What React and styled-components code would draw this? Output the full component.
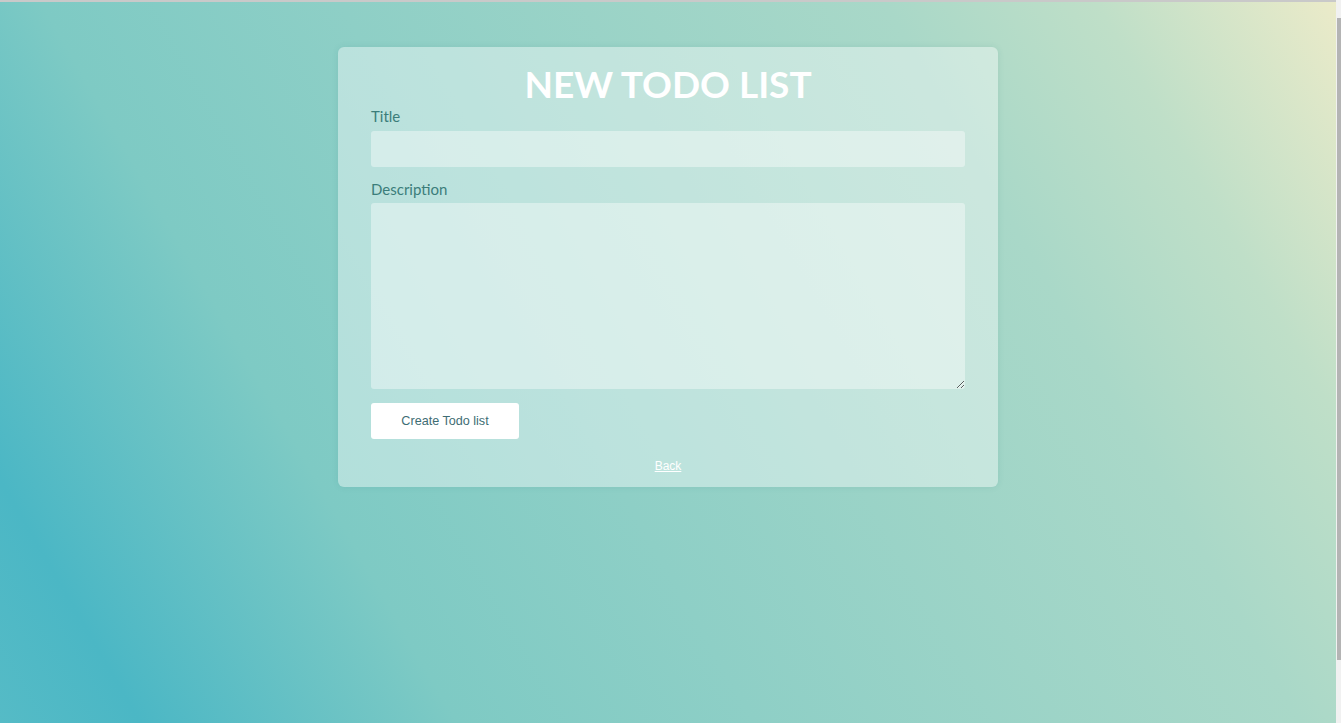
import React from "react";
import styled, { createGlobalStyle, } from "styled-components";

// --------------------------------------------------

const GlobalStyle = createGlobalStyle`
	html, body {
		margin: 0;
		padding: 0;
	}

	body {
		min-height: 100vh;
		box-sizing: border-box;
		border-top: 2px solid #c9c9c9;
		font-family: Lato, "Liberation Sans", sans-serif;
		background: linear-gradient(60deg, #55bbc6 0%, #4bb7c5 8%, #7ecac4 26%, #8ecfc6 43%, #a9d8c8 74%, #bfdfc8 86%, #ecebc9 100%);
		background-attachment: fixed;
	}
`;

const Page = styled.div`
	display: flex;
	justify-content: center;
	padding: 45px 5px 0 0;
`;

const Scrollbar = styled.div`
	position: fixed;
	top: 0;
	right: 0;
	bottom: 0;
	width: 5px;
	background: #f1f1f1;

	&::after {
		content: "";
		position: absolute;
		top: 18px;
		bottom: 63px;
		left: 1px;
		right: 0;
		background: #b4b4b4;
	}
`;

const Card = styled.form`
	box-sizing: border-box;
	width: 660px;
	padding: 13px 33px 13px;
	border-radius: 6px;
	background: rgba(255, 255, 255, 0.4);
	box-shadow: 0 0 6px rgba(40, 120, 120, 0.12);
	display: flex;
	flex-direction: column;
`;

const Heading = styled.h1`
	margin: 0;
	font-family: Lato, "Liberation Sans", sans-serif;
	font-size: 37px;
	font-weight: 700;
	line-height: 47px;
	color: #ffffff;
	text-align: center;
`;

const Label = styled.label`
	display: block;
	margin-top: ${ props => props.gap }px;
	margin-bottom: ${ props => props.below }px;
	font-size: 15px;
	line-height: 18px;
	color: #3b7d7a;
`;

const Field = styled.input`
	box-sizing: border-box;
	display: block;
	width: 100%;
	height: 36px;
	border: none;
	border-radius: 3px;
	background: rgba(255, 255, 255, 0.4);
	outline: none;
`;

const Area = styled.textarea`
	box-sizing: border-box;
	display: block;
	width: 100%;
	height: 186px;
	border: none;
	border-radius: 3px;
	background: rgba(255, 255, 255, 0.4);
	outline: none;
	resize: vertical;
`;

const Button = styled.button`
	align-self: flex-start;
	width: 148px;
	height: 36px;
	margin-top: 14px;
	border: none;
	border-radius: 3px;
	background: #ffffff;
	font-family: "Liberation Sans", Arial, sans-serif;
	font-size: 12.6px;
	color: #3e6d74;
	cursor: pointer;
`;

const BackLink = styled.a`
	align-self: center;
	margin-top: 19px;
	font-family: "Liberation Sans", Arial, sans-serif;
	font-size: 12px;
	line-height: 16px;
	color: #ffffff;
	text-decoration: underline;
`;

// --------------------------------------------------

const App = () => (
	<>
		<GlobalStyle />
		<Page>
			<Card onSubmit = { e => e.preventDefault() }>
				<Heading>NEW TODO LIST</Heading>
				<Label gap = { 0 } below = { 6 }>Title</Label>
				<Field type = "text" />
				<Label gap = { 13 } below = { 5 }>Description</Label>
				<Area />
				<Button type = "submit">Create Todo list</Button>
				<BackLink href = "#">Back</BackLink>
			</Card>
		</Page>
		<Scrollbar />
	</>
);

export default App;
